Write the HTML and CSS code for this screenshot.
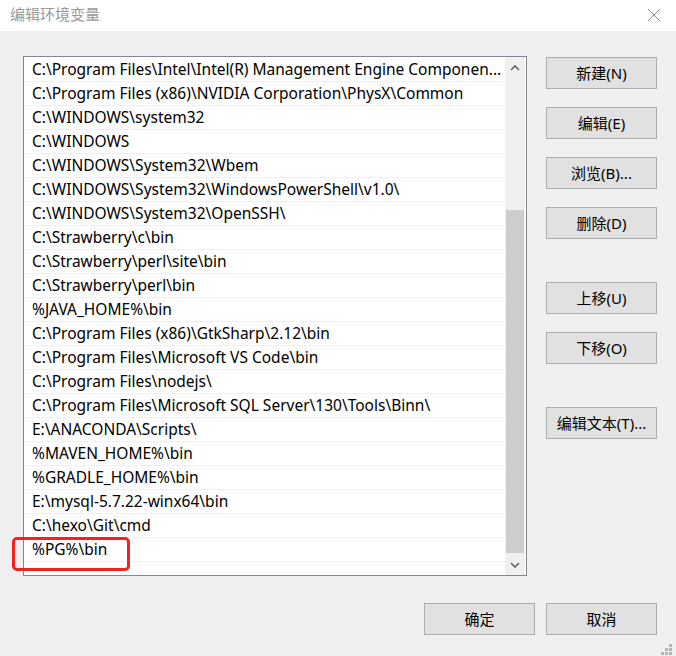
FILE: index.html
```html
<!DOCTYPE html>
<html lang="zh-CN">
<head>
  <meta charset="UTF-8" />
  <meta name="viewport" content="width=device-width, initial-scale=1.0"/>
  <title>编辑环境变量</title>
  <link rel="stylesheet" href="styles.css">
</head>
<body>

  <div class="window">
    <header class="titlebar">
      <span class="title">编辑环境变量</span>
      <svg class="close" width="14" height="14" viewBox="0 0 14 14">
        <path d="M1 1 L13 13 M13 1 L1 13" stroke="#8a8a8a" stroke-width="1" fill="none"/>
      </svg>
    </header>

    <div class="content">
      <div class="main">
        <div class="listbox">
          <ul class="paths">
            <li>C:\Program Files\Intel\Intel(R) Management Engine Componen...</li>
            <li>C:\Program Files (x86)\NVIDIA Corporation\PhysX\Common</li>
            <li>C:\WINDOWS\system32</li>
            <li>C:\WINDOWS</li>
            <li>C:\WINDOWS\System32\Wbem</li>
            <li>C:\WINDOWS\System32\WindowsPowerShell\v1.0\</li>
            <li>C:\WINDOWS\System32\OpenSSH\</li>
            <li>C:\Strawberry\c\bin</li>
            <li>C:\Strawberry\perl\site\bin</li>
            <li>C:\Strawberry\perl\bin</li>
            <li>%JAVA_HOME%\bin</li>
            <li>C:\Program Files (x86)\GtkSharp\2.12\bin</li>
            <li>C:\Program Files\Microsoft VS Code\bin</li>
            <li>C:\Program Files\nodejs\</li>
            <li>C:\Program Files\Microsoft SQL Server\130\Tools\Binn\</li>
            <li>E:\ANACONDA\Scripts\</li>
            <li>%MAVEN_HOME%\bin</li>
            <li>%GRADLE_HOME%\bin</li>
            <li>E:\mysql-5.7.22-winx64\bin</li>
            <li>C:\hexo\Git\cmd</li>
            <li>%PG%\bin</li>
          </ul>
          <div class="scrollbar">
            <div class="arrow">
              <svg width="10" height="6" viewBox="0 0 10 6">
                <path d="M1 5 L5 1 L9 5" stroke="#606060" stroke-width="1.6" fill="none"/>
              </svg>
            </div>
            <div class="track">
              <div class="thumb"></div>
            </div>
            <div class="arrow">
              <svg width="10" height="6" viewBox="0 0 10 6">
                <path d="M1 1 L5 5 L9 1" stroke="#606060" stroke-width="1.6" fill="none"/>
              </svg>
            </div>
          </div>
        </div>

        <div class="side">
          <button>新建(N)</button>
          <button>编辑(E)</button>
          <button>浏览(B)...</button>
          <button>删除(D)</button>
          <button class="group">上移(U)</button>
          <button>下移(O)</button>
          <button class="group">编辑文本(T)...</button>
        </div>
      </div>

      <div class="footer">
        <button>确定</button>
        <button>取消</button>
      </div>
    </div>

    <div class="highlight"></div>
    <div class="grip">
      <span></span><span></span><span></span>
      <span></span><span></span><span></span>
    </div>
  </div>

</body>
</html>
```

FILE: styles.css
```css
:root {
  --window-bg: #f0f0f0;
  --button-bg: #e1e1e1;
  --button-border: #adadad;
  --list-border: #828790;
  --row-line: #f0f0f0;
  --thumb: #cdcdcd;
}

* {
  box-sizing: border-box;
}

body {
  margin: 0;
  background-color: var(--window-bg);
  font-family: "Noto Sans", "Noto Sans CJK SC", sans-serif;
  font-size: 15px;
  color: #000;
}

.window {
  position: relative;
  width: 676px;
  height: 656px;
  overflow: hidden;
}

.titlebar {
  height: 31px;
  background-color: #fff;
  display: flex;
  align-items: center;
  justify-content: space-between;
  padding: 0 15px 4px 10px;
}

.close {
  margin-top: 2px;
}

.title {
  color: #999;
  font-family: "Noto Sans CJK SC", sans-serif;
  font-size: 15px;
}

.content {
  padding: 25px 19px 0 23px;
}

.main {
  display: flex;
  gap: 19px;
}

.listbox {
  width: 504px;
  height: 520px;
  border: 1px solid var(--list-border);
  background-color: #fff;
  display: flex;
  padding: 1px 1px 0 0;
}

.paths {
  list-style: none;
  margin: 0;
  padding: 0;
  flex: 1;
  overflow: hidden;
  font-size: 15.5px;
}

.paths li {
  height: 24px;
  line-height: 23px;
  border-bottom: 1px solid var(--row-line);
  padding-left: 8px;
  white-space: nowrap;
  overflow: hidden;
}

.scrollbar {
  width: 20px;
  background-color: var(--window-bg);
  display: flex;
  flex-direction: column;
  margin-top: -1px;
}

.arrow {
  height: 21px;
  display: flex;
  align-items: center;
  justify-content: center;
}

.track {
  flex: 1;
  padding-top: 132px;
}

.thumb {
  height: 343px;
  margin: 0 1px;
  background-color: var(--thumb);
}

.side {
  display: flex;
  flex-direction: column;
  gap: 18px;
  margin-top: 1px;
}

button {
  width: 111px;
  height: 32px;
  background-color: var(--button-bg);
  border: 1px solid var(--button-border);
  border-radius: 0;
  font-family: "Noto Sans", "Noto Sans CJK SC", sans-serif;
  font-size: 15px;
  color: #000;
  padding: 0 0 1px;
}

.side .group {
  margin-top: 25px;
}

.footer {
  display: flex;
  justify-content: flex-end;
  gap: 11px;
  margin-top: 27px;
}

.highlight {
  position: absolute;
  left: 12px;
  top: 537px;
  width: 118px;
  height: 34px;
  border: 3px solid #f52020;
  border-radius: 5px;
}

.grip {
  position: absolute;
  right: 4px;
  bottom: 1px;
  display: grid;
  grid-template-columns: repeat(3, 3px);
  grid-template-rows: repeat(3, 3px);
  gap: 1px;
}

.grip span {
  background-color: #b5b5b5;
}

.grip span:nth-child(1) { grid-area: 1 / 3; }
.grip span:nth-child(2) { grid-area: 2 / 2; }
.grip span:nth-child(3) { grid-area: 2 / 3; }
.grip span:nth-child(4) { grid-area: 3 / 1; }
.grip span:nth-child(5) { grid-area: 3 / 2; }
.grip span:nth-child(6) { grid-area: 3 / 3; }
```
